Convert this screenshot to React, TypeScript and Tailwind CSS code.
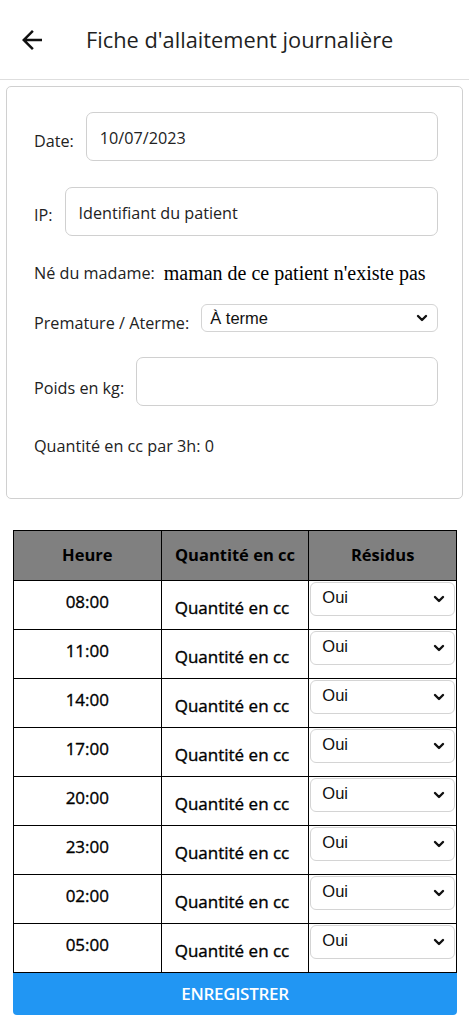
import { useState } from "react";

const hours = ["08:00", "11:00", "14:00", "17:00", "20:00", "23:00", "02:00", "05:00"];

function Chevron() {
  return (
    <svg
      viewBox="0 0 12 12"
      className="pointer-events-none absolute right-[9px] top-1/2 h-[12px] w-[12px] -translate-y-1/2"
      aria-hidden
    >
      <polyline
        points="2,4 6,8 10,4"
        fill="none"
        stroke="#111"
        strokeWidth="2.4"
        strokeLinecap="round"
        strokeLinejoin="round"
      />
    </svg>
  );
}

function FakeSelect({ value, className }: { value: string; className?: string }) {
  return (
    <div
      className={`relative rounded-[6px] border border-[#d4d4d4] bg-white font-['Liberation_Sans',Arial,sans-serif] text-[16.5px] text-[#111] ${className ?? ""}`}
    >
      <span className="block">{value}</span>
      <Chevron />
    </div>
  );
}

export default function App() {
  const [date] = useState("10/07/2023");

  return (
    <div className="min-h-[1030px] w-[469px] bg-white font-['Open_Sans',sans-serif] text-[#222]">
      {/* header */}
      <header className="flex h-[80px] items-center border-b border-[#dedede]">
        <svg viewBox="0 0 24 24" className="ml-[17px] h-[30px] w-[30px]" aria-hidden>
          <path
            d="M20 11H7.83l5.59-5.59L12 4l-8 8 8 8 1.41-1.41L7.83 13H20v-2z"
            fill="#111"
          />
        </svg>
        <h1 className="ml-[39px] text-[21.8px] leading-none text-[#1f1f1f]">
          Fiche d'allaitement journalière
        </h1>
      </header>

      {/* form card */}
      <div className="mx-[6px] mt-[6px] rounded-[5px] border border-[#d0d0d0] pb-[40px] pl-[27px] pr-[24px] pt-[25px] text-[16.2px] leading-[24px]">
        <div className="flex items-start gap-3">
          <span className="mt-[17px]">Date:</span>
          <div className="flex h-[49px] flex-1 items-center rounded-[7px] border border-[#d0d0d0] px-[13px] pt-[2px]">
            {date}
          </div>
        </div>

        <div className="mt-[26px] flex items-start gap-3">
          <span className="mt-[16px]">IP:</span>
          <div className="flex h-[49px] flex-1 items-center rounded-[7px] border border-[#d0d0d0] px-[13px] pt-[2px]">
            Identifiant du patient
          </div>
        </div>

        <div className="mt-[25px] flex h-[24px] items-center gap-[9px]">
          <span>Né du madame:</span>
          <span className="font-['Liberation_Serif','Times_New_Roman',serif] text-[20px] text-black">
            maman de ce patient n'existe pas
          </span>
        </div>

        <div className="mt-[19px] flex items-start gap-3">
          <span className="mt-[7px]">Premature / Aterme:</span>
          <FakeSelect value="À terme" className="h-[28px] flex-1 pl-[8px] leading-[26px]" />
        </div>

        <div className="mt-[22px] flex items-start gap-3">
          <span className="mt-[19px]">Poids en kg:</span>
          <div className="h-[49px] flex-1 rounded-[7px] border border-[#d0d0d0]" />
        </div>

        <p className="mt-[28px]">Quantité en cc par 3h: 0</p>
      </div>

      {/* table */}
      <div className="mx-[13px] mt-[31px] w-[444px]">
        <table className="w-full table-fixed border-collapse text-black">
          <thead>
            <tr className="h-[50px] bg-[#808080] text-[16.5px]">
              <th className="border border-black font-bold">Heure</th>
              <th className="border border-black font-bold">Quantité en cc</th>
              <th className="border border-black font-bold">Résidus</th>
            </tr>
          </thead>
          <tbody>
            {hours.map((h) => (
              <tr key={h} className="h-[49px] text-[17px]">
                <td className="border border-black pt-[10px] text-center align-top leading-[22px] [-webkit-text-stroke:0.35px_#000]">
                  {h}
                </td>
                <td className="border border-black pt-[16px] pr-[6px] text-center align-top leading-[22px] [-webkit-text-stroke:0.35px_#000]">
                  Quantité en cc
                </td>
                <td className="border border-black px-[1px] pt-[1px] align-top">
                  <FakeSelect value="Oui" className="h-[34px] pl-[11px] pt-[3px] leading-[22px]" />
                </td>
              </tr>
            ))}
          </tbody>
        </table>
        <button
          type="button"
          className="flex h-[42px] w-full items-center justify-center rounded-b-[4px] bg-[#2196f3] text-[17px] font-semibold tracking-[-0.3px] text-white"
        >
          ENREGISTRER
        </button>
      </div>
    </div>
  );
}
